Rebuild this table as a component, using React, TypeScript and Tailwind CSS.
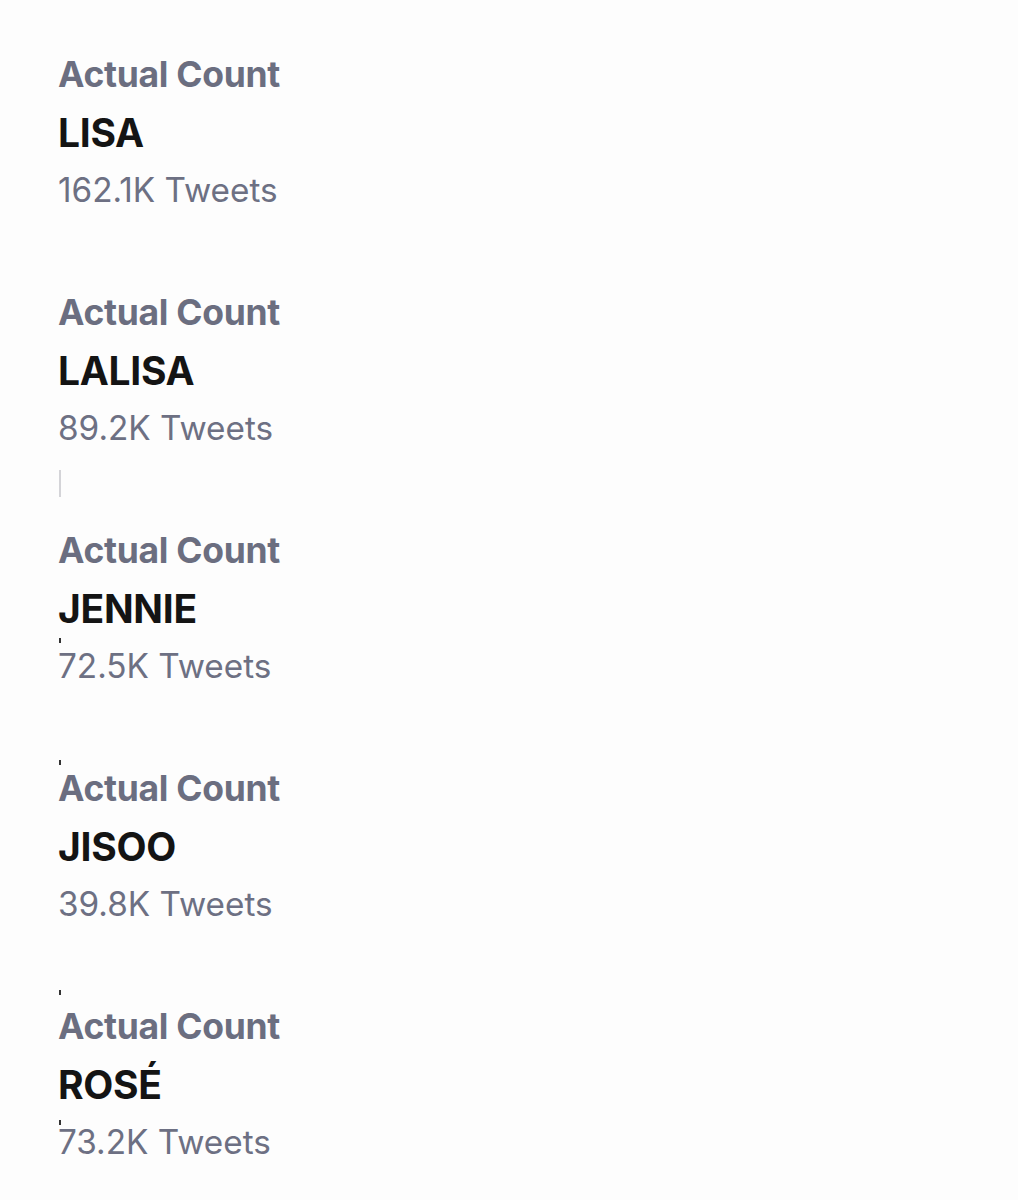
const counts = [
  { name: "LISA", tweets: "162.1K" },
  { name: "LALISA", tweets: "89.2K" },
  { name: "JENNIE", tweets: "72.5K" },
  { name: "JISOO", tweets: "39.8K" },
  { name: "ROSÉ", tweets: "73.2K" },
];

// stray marks left over from the original capture
const specks = [
  { top: "top-[638px]", h: "h-[5px]" },
  { top: "top-[760px]", h: "h-[5px]" },
  { top: "top-[990px]", h: "h-[5px]" },
  { top: "top-[1120px]", h: "h-[5px]" },
];

export default function App() {
  return (
    <main
      className="relative min-h-[1200px] w-[1018px] overflow-hidden bg-[#fdfdfd] pl-[58px] pt-[46px]"
      style={{ fontFamily: "Inter, 'Liberation Sans', sans-serif" }}
    >
      <div className="flex flex-col gap-[64px]">
        {counts.map((item, i) => (
          <section key={item.name} className="relative flex flex-col">
            <p className="h-[58px] text-[35.5px] font-bold leading-[58px] tracking-[-0.3px] text-[#6b6e80]">
              Actual Count
            </p>
            <h2 className="h-[57px] text-[39px] font-bold leading-[57px] tracking-[-0.3px] text-[#141414]">
              {item.name}
            </h2>
            <p className="h-[59px] text-[33.3px] leading-[59px] text-[#6d7083]">
              {item.tweets} Tweets
            </p>
            {i === 1 && (
              <div className="absolute left-[1px] top-[186px] h-[27px] w-[2px] bg-[#d4d4d8]" />
            )}
          </section>
        ))}
      </div>
      {specks.map((s) => (
        <span key={s.top} className={`absolute left-[59px] w-[2px] bg-[#333] ${s.top} ${s.h}`} />
      ))}
    </main>
  );
}
